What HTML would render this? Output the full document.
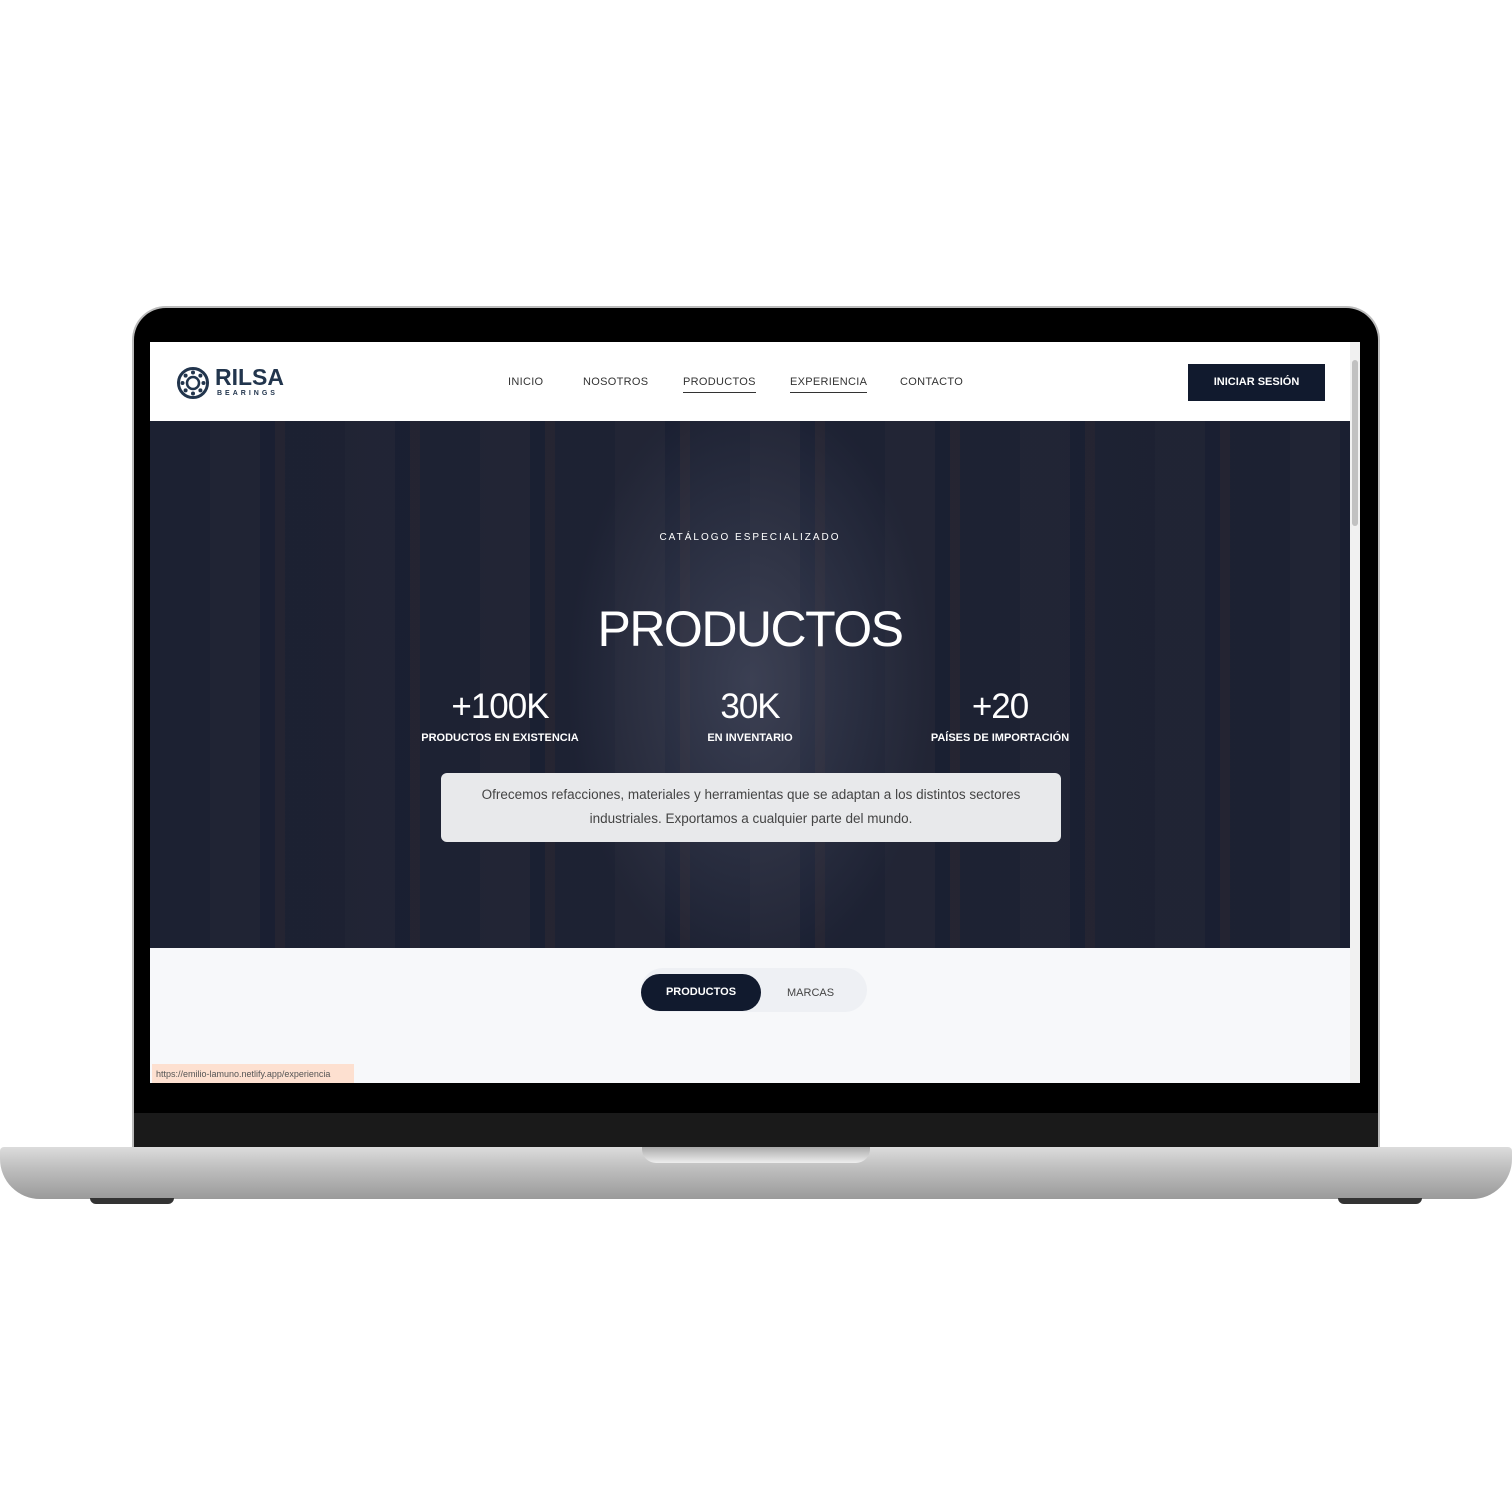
<!DOCTYPE html><html><head><style>
*{margin:0;padding:0;box-sizing:border-box}
body{width:1512px;height:1512px;background:#fff;position:relative;overflow:hidden;font-family:"Liberation Sans",sans-serif}
.abs{position:absolute}
.lid{left:132px;top:306px;width:1248px;height:845px;background:#000;border-radius:34px 34px 0 0;border:2px solid #bbb;border-bottom:none}
.notch{left:690px;top:320px;width:132px;height:27px;background:#000;border-radius:0 0 10px 10px}
.screen{left:150px;top:342px;width:1210px;height:741px;background:#f7f8fa;overflow:hidden}
.chin{left:134px;top:1113px;width:1244px;height:35px;background:#1a1a1a}
.base{left:0;top:1147px;width:1512px;height:52px;background:linear-gradient(#dcdcdc,#bfbfbf 40%,#9a9a9a);border-radius:4px 4px 40px 40px}
.groove{left:642px;top:1147px;width:228px;height:16px;background:linear-gradient(#aaa,#eee);border-radius:0 0 14px 14px}
.foot{top:1198px;width:84px;height:6px;background:#333;border-radius:0 0 6px 6px}
.nav{left:0;top:0;width:1200px;height:79px;background:#fff}
.nav a{position:absolute;top:34px;font-size:11px;color:#333;letter-spacing:.3px}
.hero{left:0;top:79px;width:1200px;height:527px;background:
linear-gradient(90deg,rgba(20,25,40,.2),rgba(20,25,40,0) 30%,rgba(20,25,40,0) 70%,rgba(20,25,40,.2)),
repeating-linear-gradient(90deg,#2a2d3c 0 60px,#3b3a45 60px 110px,#1d2438 110px 125px,#4a3a3a 125px 135px),#262a3a}
.hero:after{content:"";position:absolute;left:0;top:0;right:0;bottom:0;background:radial-gradient(ellipse 260px 420px at 600px 260px,rgba(60,65,85,.9),rgba(25,30,48,.75) 70%);}
.w{color:#fff;text-align:center;position:absolute;z-index:2}
</style></head><body>
<div class="abs lid"></div>
<div class="abs notch"></div>
<div class="abs screen">
 <div class="abs nav">
  <svg class="abs" style="left:26px;top:24px" width="34" height="34" viewBox="0 0 34 34"><circle cx="17" cy="17" r="14.5" fill="none" stroke="#22354d" stroke-width="3"/><circle cx="17" cy="17" r="6" fill="none" stroke="#22354d" stroke-width="2.5"/><g fill="#22354d"><circle cx="17" cy="6.5" r="2"/><circle cx="17" cy="27.5" r="2"/><circle cx="6.5" cy="17" r="2"/><circle cx="27.5" cy="17" r="2"/><circle cx="9.6" cy="9.6" r="2"/><circle cx="24.4" cy="24.4" r="2"/><circle cx="24.4" cy="9.6" r="2"/><circle cx="9.6" cy="24.4" r="2"/></g></svg>
  <div class="abs" style="left:65px;top:22px;font-size:23px;font-weight:bold;color:#22354d">RILSA</div>
  <div class="abs" style="left:67px;top:48px;font-size:7px;font-weight:bold;color:#22354d;letter-spacing:3px">BEARINGS</div>
  <a style="left:358px">INICIO</a><a style="left:433px">NOSOTROS</a>
  <a style="left:533px;border-bottom:1px solid #333;padding-bottom:4px">PRODUCTOS</a>
  <a style="left:640px;border-bottom:1px solid #333;padding-bottom:4px">EXPERIENCIA</a>
  <a style="left:750px">CONTACTO</a>
  <div class="abs" style="left:1038px;top:22px;width:137px;height:37px;background:#111a2e;color:#fff;font-size:11px;font-weight:bold;text-align:center;line-height:37px">INICIAR SESIÓN</div>
 </div>
 <div class="abs hero">
  <div class="w" style="left:0;width:1200px;top:111px;font-size:10px;letter-spacing:2px">CATÁLOGO ESPECIALIZADO</div>
  <div class="w" style="left:0;width:1200px;top:179px;font-size:50px;font-weight:300;letter-spacing:-1.5px">PRODUCTOS</div>
  <div class="w" style="left:250px;width:200px;top:266px;font-size:35px;font-weight:300;letter-spacing:-1px">+100K</div>
  <div class="w" style="left:250px;width:200px;top:311px;font-size:11px;font-weight:bold">PRODUCTOS EN EXISTENCIA</div>
  <div class="w" style="left:500px;width:200px;top:266px;font-size:35px;font-weight:300;letter-spacing:-1px">30K</div>
  <div class="w" style="left:500px;width:200px;top:311px;font-size:11px;font-weight:bold">EN INVENTARIO</div>
  <div class="w" style="left:750px;width:200px;top:266px;font-size:35px;font-weight:300;letter-spacing:-1px">+20</div>
  <div class="w" style="left:750px;width:200px;top:311px;font-size:11px;font-weight:bold">PAÍSES DE IMPORTACIÓN</div>
  <div class="abs" style="z-index:2;left:291px;top:352px;width:620px;height:69px;background:#e8e9eb;border-radius:6px;color:#444;font-size:13.5px;text-align:center;line-height:24px;padding-top:10px">Ofrecemos refacciones, materiales y herramientas que se adaptan a los distintos sectores<br>industriales. Exportamos a cualquier parte del mundo.</div>
 </div>
 <div class="abs" style="left:491px;top:626px;width:226px;height:44px;background:#eef0f4;border-radius:22px"></div>
 <div class="abs" style="left:491px;top:632px;width:120px;height:37px;background:#111a2e;border-radius:19px;color:#fff;font-size:11px;font-weight:bold;text-align:center;line-height:37px">PRODUCTOS</div>
 <div class="abs" style="left:637px;top:645px;font-size:11px;color:#444">MARCAS</div>
 <div class="abs" style="left:1200px;top:0;width:10px;height:741px;background:#f1f1f1"></div>
 <div class="abs" style="left:1202px;top:18px;width:6px;height:166px;background:#c1c1c1;border-radius:3px"></div>
 <div class="abs" style="left:2px;top:722px;width:202px;height:19px;background:#fde0d0;font-size:9px;color:#555;padding:5px 4px">https://emilio-lamuno.netlify.app/experiencia</div>
</div>
<div class="abs chin"></div>
<div class="abs base"></div>
<div class="abs groove"></div>
<div class="abs foot" style="left:90px"></div>
<div class="abs foot" style="left:1338px"></div>
</body></html>
